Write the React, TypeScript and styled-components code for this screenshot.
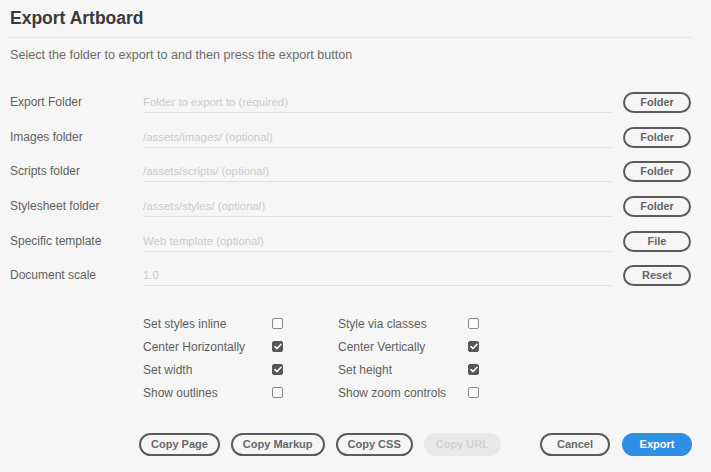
import React from "react";
import styled, { createGlobalStyle } from "styled-components";

const GlobalStyle = createGlobalStyle`
  html, body { margin: 0; padding: 0; background: #f6f6f6; }
  body { font-family: "Liberation Sans", Arial, sans-serif; -webkit-font-smoothing: antialiased; }
  * { box-sizing: border-box; }
`;

const Dialog = styled.div`
  width: 711px;
  height: 472px;
  padding: 0 19px 0 10px;
  background: #f6f6f6;
  display: flex;
  flex-direction: column;
`;

const Title = styled.h1`
  margin: 0 0 0 -2px;
  padding-left: 2px;
  height: 38px;
  line-height: 37px;
  font-size: 17.5px;
  font-weight: bold;
  color: #3a3a3a;
  border-bottom: 1px solid #e6e6e6;
`;

const Subtitle = styled.p`
  margin: 10px 0 0;
  line-height: 14px;
  font-size: 12.6px;
  color: #6b6b6b;
`;

const Form = styled.div`
  margin-top: 30px;
  display: flex;
  flex-direction: column;
  gap: 13.7px;
`;

const Row = styled.div`
  display: grid;
  grid-template-columns: 122px 469px 68px;
  column-gap: 11px;
  height: 21px;
  align-items: stretch;
`;

const Label = styled.span`
  font-size: 12px;
  line-height: 21px;
  color: #5f5f5f;
  white-space: nowrap;
`;

const Field = styled.div`
  border-bottom: 1px solid #e3e3e3;
  font-size: 11.4px;
  line-height: 20px;
  color: #cbcbcb;
  white-space: nowrap;
  overflow: hidden;
`;

const Pill = styled.button<{ $small?: boolean; $primary?: boolean; $disabled?: boolean }>`
  flex: none;
  height: ${(p) => (p.$small ? "21px" : "23px")};
  min-width: ${(p) => (p.$small ? "68px" : "70px")};
  padding: 0 10px;
  border-radius: 12px;
  border: 2px solid ${(p) => (p.$primary ? "#2f8fe6" : p.$disabled ? "#e9e9e9" : "#5b5b5b")};
  background: ${(p) => (p.$primary ? "#2f8fe6" : p.$disabled ? "#e9e9e9" : "transparent")};
  color: ${(p) => (p.$primary ? "#ffffff" : p.$disabled ? "#d2d2d2" : "#676767")};
  font-family: "Liberation Sans", Arial, sans-serif;
  font-size: 11px;
  font-weight: bold;
  line-height: 1;
  cursor: default;
  white-space: nowrap;
`;

const Options = styled.div`
  margin-top: 26px;
  padding-left: 133px;
  display: grid;
  grid-template-columns: 129px 11px 55px 130px 11px;
  grid-auto-rows: 23px;
  align-items: center;
`;

const OptionLabel = styled.span`
  font-size: 12px;
  color: #5f5f5f;
  white-space: nowrap;
`;

const Box = styled.span<{ $checked?: boolean }>`
  width: 11px;
  height: 11px;
  border-radius: 2px;
  border: 1px solid ${(p) => (p.$checked ? "#575757" : "#8a8a8a")};
  background: ${(p) => (p.$checked ? "#575757" : "#fbfbfb")};
  display: flex;
  align-items: center;
  justify-content: center;
`;

const Actions = styled.div`
  margin-top: 29px;
  padding-left: 129px;
  display: flex;
  justify-content: space-between;
  align-items: center;
`;

const ButtonGroup = styled.div<{ $gap: number }>`
  display: flex;
  gap: ${(p) => p.$gap}px;
  align-items: center;
`;

const Check = () => (
  <svg width="8" height="7" viewBox="0 0 8 7">
    <path d="M1 3.6 L3.1 5.6 L7 1.2" fill="none" stroke="#fff" strokeWidth="1.5" strokeLinecap="round" strokeLinejoin="round" />
  </svg>
);

const Checkbox = ({ checked }: { checked?: boolean }) => (
  <Box $checked={checked}>{checked && <Check />}</Box>
);

const rows = [
  { label: "Export Folder", placeholder: "Folder to export to (required)", button: "Folder" },
  { label: "Images folder", placeholder: "/assets/images/ (optional)", button: "Folder" },
  { label: "Scripts folder", placeholder: "/assets/scripts/ (optional)", button: "Folder" },
  { label: "Stylesheet folder", placeholder: "/assets/styles/ (optional)", button: "Folder" },
  { label: "Specific template", placeholder: "Web template (optional)", button: "File" },
  { label: "Document scale", placeholder: "1.0", button: "Reset" },
];

const options: [string, boolean, string, boolean][] = [
  ["Set styles inline", false, "Style via classes", false],
  ["Center Horizontally", true, "Center Vertically", true],
  ["Set width", true, "Set height", true],
  ["Show outlines", false, "Show zoom controls", false],
];

export default function App() {
  return (
    <>
      <GlobalStyle />
      <Dialog>
        <Title>Export Artboard</Title>
        <Subtitle>Select the folder to export to and then press the export button</Subtitle>
        <Form>
          {rows.map((r) => (
            <Row key={r.label}>
              <Label>{r.label}</Label>
              <Field>{r.placeholder}</Field>
              <Pill $small>{r.button}</Pill>
            </Row>
          ))}
        </Form>
        <Options>
          {options.map(([a, ac, b, bc]) => (
            <React.Fragment key={a}>
              <OptionLabel>{a}</OptionLabel>
              <Checkbox checked={ac} />
              <span />
              <OptionLabel>{b}</OptionLabel>
              <Checkbox checked={bc} />
            </React.Fragment>
          ))}
        </Options>
        <Actions>
          <ButtonGroup $gap={11}>
            <Pill>Copy Page</Pill>
            <Pill>Copy Markup</Pill>
            <Pill>Copy CSS</Pill>
            <Pill $disabled>Copy URL</Pill>
          </ButtonGroup>
          <ButtonGroup $gap={12}>
            <Pill>Cancel</Pill>
            <Pill $primary>Export</Pill>
          </ButtonGroup>
        </Actions>
      </Dialog>
    </>
  );
}
